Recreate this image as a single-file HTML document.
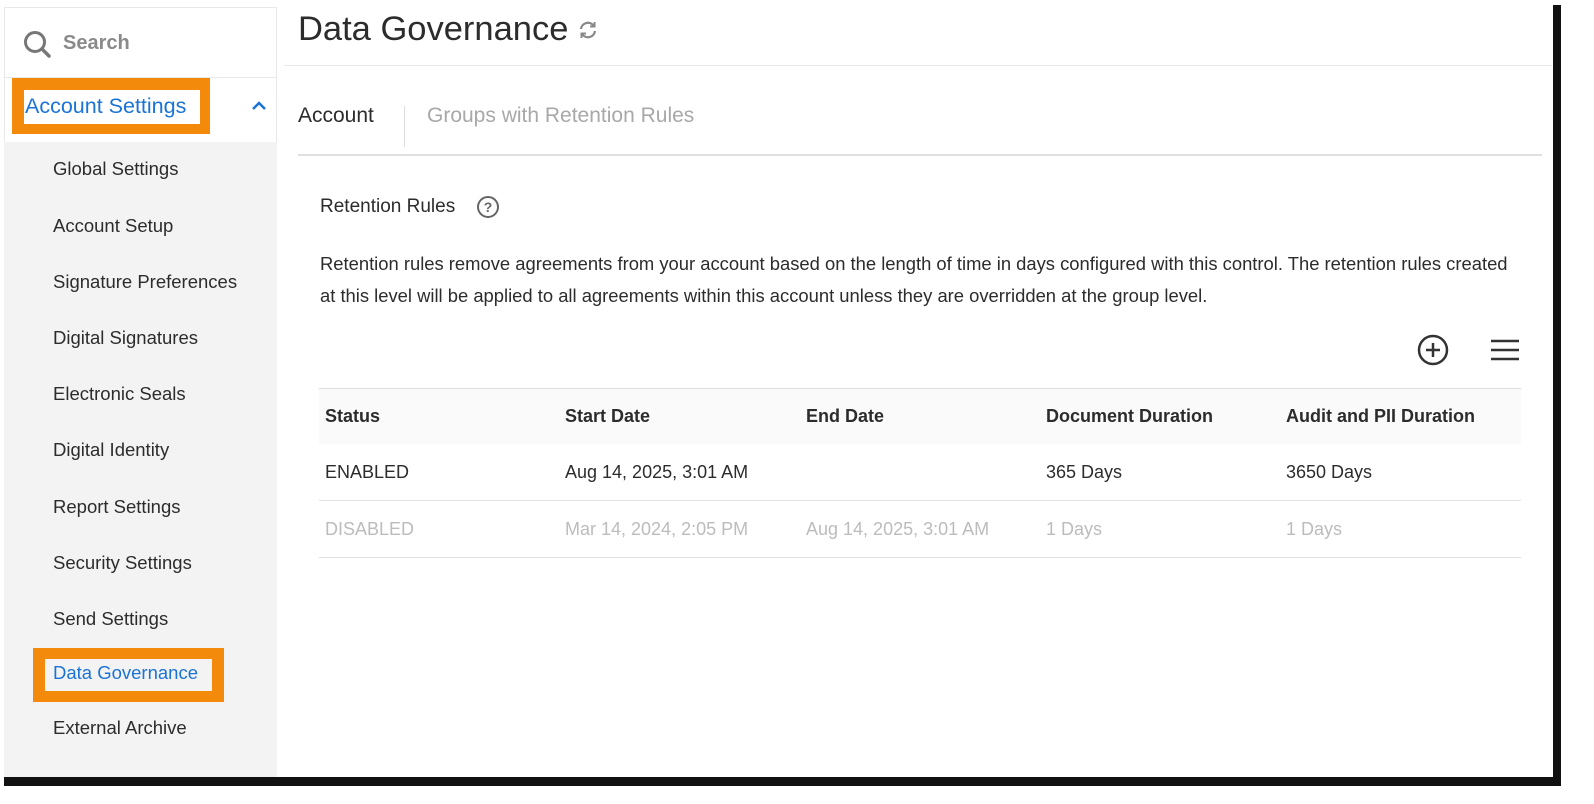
<!DOCTYPE html>
<html><head><meta charset="utf-8"><style>
*{margin:0;padding:0;box-sizing:border-box}
body{width:1594px;height:804px;background:#fff;font-family:"Liberation Sans",sans-serif;position:relative;overflow:hidden;color:#2c2c2c}
.abs{position:absolute}
.frame{left:0;top:0;width:1553px;height:777px;background:#fff;box-shadow:6px 7px 0 2px #111}
.side{left:4px;top:7px;width:273px;height:770px;border:1px solid #e8e8e8;background:#fff}
.sidebg{left:4px;top:142px;width:273px;height:635px;background:#f3f3f3}
.item{position:absolute;left:53px;font-size:18.5px;color:#2c2c2c}
.th{position:absolute;font-size:18px;font-weight:bold;color:#2c2c2c}
.td{position:absolute;font-size:18px;color:#2c2c2c}
.dis{color:#bcbcbc}
</style></head><body>
<div class="abs frame"></div>
<div class="abs side"></div>
<div class="abs" style="left:4px;top:77px;width:273px;height:1px;background:#e8e8e8"></div>
<div class="abs sidebg"></div>
<svg class="abs" style="left:22px;top:29px" width="30" height="30" viewBox="0 0 30 30"><circle cx="13" cy="13" r="9.5" fill="none" stroke="#777" stroke-width="3"/><path d="M20 20l7 7" stroke="#777" stroke-width="3.5" stroke-linecap="round"/></svg>
<div class="abs" style="left:63px;top:32px;font-size:20px;color:#8a8a8a;font-weight:bold">Search</div>
<div class="abs" style="left:12px;top:78px;width:198px;height:56px;background:#f48a0c"></div>
<div class="abs" style="left:24px;top:90px;width:176px;height:34px;background:#fff"></div>
<div class="abs" style="left:25px;top:94px;font-size:21.5px;color:#1a73d6">Account Settings</div>
<svg class="abs" style="left:251px;top:100px" width="16" height="12"><path d="M2 9l6-6 6 6" fill="none" stroke="#1a73d6" stroke-width="2.5"/></svg>
<div class="item" style="top:158px">Global Settings</div>
<div class="item" style="top:215px">Account Setup</div>
<div class="item" style="top:271px">Signature Preferences</div>
<div class="item" style="top:327px">Digital Signatures</div>
<div class="item" style="top:383px">Electronic Seals</div>
<div class="item" style="top:439px">Digital Identity</div>
<div class="item" style="top:496px">Report Settings</div>
<div class="item" style="top:552px">Security Settings</div>
<div class="item" style="top:608px">Send Settings</div>
<div class="abs" style="left:33px;top:648px;width:191px;height:54px;background:#f48a0c"></div>
<div class="abs" style="left:45px;top:659px;width:167px;height:32px;background:#f3f3f3"></div>
<div class="item" style="top:662px;color:#1a73d6">Data Governance</div>
<div class="item" style="top:717px">External Archive</div>

<div class="abs" style="left:298px;top:10px;font-size:34.5px;color:#2c2c2c;white-space:nowrap">Data Governance<svg style="margin-left:9px;vertical-align:-1px" width="22" height="22" viewBox="0 0 22 22"><path d="M4 10a7 7 0 0 1 12.5-3.5M18 12a7 7 0 0 1-12.5 3.5" fill="none" stroke="#888" stroke-width="2.2"/><path d="M17.5 3v4.5h-4.5M4.5 19v-4.5h4.5" fill="none" stroke="#888" stroke-width="2"/></svg></div>
<div class="abs" style="left:284px;top:65px;width:1268px;height:1px;background:#e8e8e8"></div>
<div class="abs" style="left:298px;top:104px;font-size:21px;color:#2c2c2c">Account</div>
<div class="abs" style="left:404px;top:106px;width:1px;height:41px;background:#ddd"></div>
<div class="abs" style="left:427px;top:104px;font-size:21px;color:#a8a8a8">Groups with Retention Rules</div>
<div class="abs" style="left:298px;top:154px;width:1244px;height:2px;background:#e0e0e0"></div>
<div class="abs" style="left:320px;top:196px;font-size:19px;color:#2c2c2c">Retention Rules</div>
<svg class="abs" style="left:476px;top:195px" width="24" height="24"><circle cx="12" cy="12" r="10" fill="none" stroke="#666" stroke-width="2"/><text x="12" y="17" text-anchor="middle" font-size="14" font-weight="bold" fill="#666" font-family="Liberation Sans">?</text></svg>
<div class="abs" style="left:320px;top:248px;width:1205px;font-size:18.4px;line-height:32px;color:#2c2c2c">Retention rules remove agreements from your account based on the length of time in days configured with this control. The retention rules created at this level will be applied to all agreements within this account unless they are overridden at the group level.</div>
<svg class="abs" style="left:1416px;top:333px" width="34" height="34"><circle cx="17" cy="17" r="14" fill="none" stroke="#333" stroke-width="2.5"/><path d="M17 10v14M10 17h14" stroke="#333" stroke-width="2.5"/></svg>
<svg class="abs" style="left:1490px;top:338px" width="30" height="24"><path d="M1 3h28M1 12h28M1 21h28" stroke="#333" stroke-width="2.5"/></svg>
<div class="abs" style="left:319px;top:388px;width:1202px;height:1px;background:#ddd"></div>
<div class="abs" style="left:319px;top:389px;width:1202px;height:55px;background:#fafafa"></div>
<div class="th" style="left:325px;top:406px">Status</div>
<div class="th" style="left:565px;top:406px">Start Date</div>
<div class="th" style="left:806px;top:406px">End Date</div>
<div class="th" style="left:1046px;top:406px">Document Duration</div>
<div class="th" style="left:1286px;top:406px">Audit and PII Duration</div>
<div class="td" style="left:325px;top:462px">ENABLED</div>
<div class="td" style="left:565px;top:462px">Aug 14, 2025, 3:01 AM</div>
<div class="td" style="left:1046px;top:462px">365 Days</div>
<div class="td" style="left:1286px;top:462px">3650 Days</div>
<div class="abs" style="left:319px;top:500px;width:1202px;height:1px;background:#e2e2e2"></div>
<div class="td dis" style="left:325px;top:519px">DISABLED</div>
<div class="td dis" style="left:565px;top:519px">Mar 14, 2024, 2:05 PM</div>
<div class="td dis" style="left:806px;top:519px">Aug 14, 2025, 3:01 AM</div>
<div class="td dis" style="left:1046px;top:519px">1 Days</div>
<div class="td dis" style="left:1286px;top:519px">1 Days</div>
<div class="abs" style="left:319px;top:557px;width:1202px;height:1px;background:#e2e2e2"></div>
</body></html>
